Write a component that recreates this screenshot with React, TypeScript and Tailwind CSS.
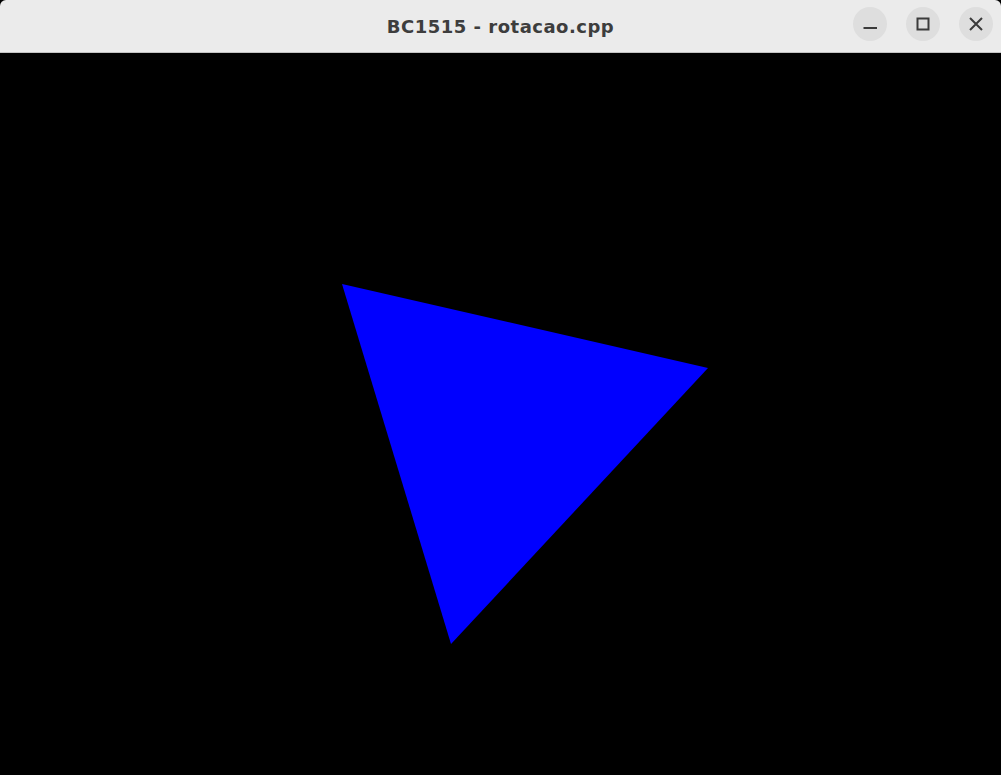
import React from 'react';

export default function App() {
  return (
    <div className="flex h-[775px] w-[1001px] flex-col overflow-hidden bg-black">
      {/* Title bar */}
      <div className="relative flex h-[53px] shrink-0 items-center justify-center rounded-t-[6px] border-b border-[#c4c4c4] bg-[#ebebeb]">
        <span className="font-['DejaVu_Sans',sans-serif] text-[18px] font-bold tracking-[0.5px] text-[#3d3d3d]">
          BC1515 - rotacao.cpp
        </span>
        <div className="absolute right-[8px] top-[7px] flex gap-[19px]">
          <button className="flex h-[34px] w-[34px] items-center justify-center rounded-full bg-[#dedede]">
            <svg width="18" height="18" viewBox="0 0 18 18">
              <rect x="2.5" y="12" width="13.5" height="2" fill="#3b3b3b" />
            </svg>
          </button>
          <button className="flex h-[34px] w-[34px] items-center justify-center rounded-full bg-[#dedede]">
            <svg width="18" height="18" viewBox="0 0 18 18">
              <rect x="3.5" y="3.5" width="11" height="11" fill="none" stroke="#3b3b3b" strokeWidth="2" />
            </svg>
          </button>
          <button className="flex h-[34px] w-[34px] items-center justify-center rounded-full bg-[#dedede]">
            <svg width="18" height="18" viewBox="0 0 18 18">
              <path d="M3 3 L15 15 M15 3 L3 15" stroke="#3b3b3b" strokeWidth="2" />
            </svg>
          </button>
        </div>
      </div>

      {/* Canvas */}
      <div className="flex-1">
        <svg width="1001" height="722" viewBox="0 53 1001 722" className="block">
          <polygon points="342,284 708,368 451,644" fill="#0000ff" />
        </svg>
      </div>
    </div>
  );
}
